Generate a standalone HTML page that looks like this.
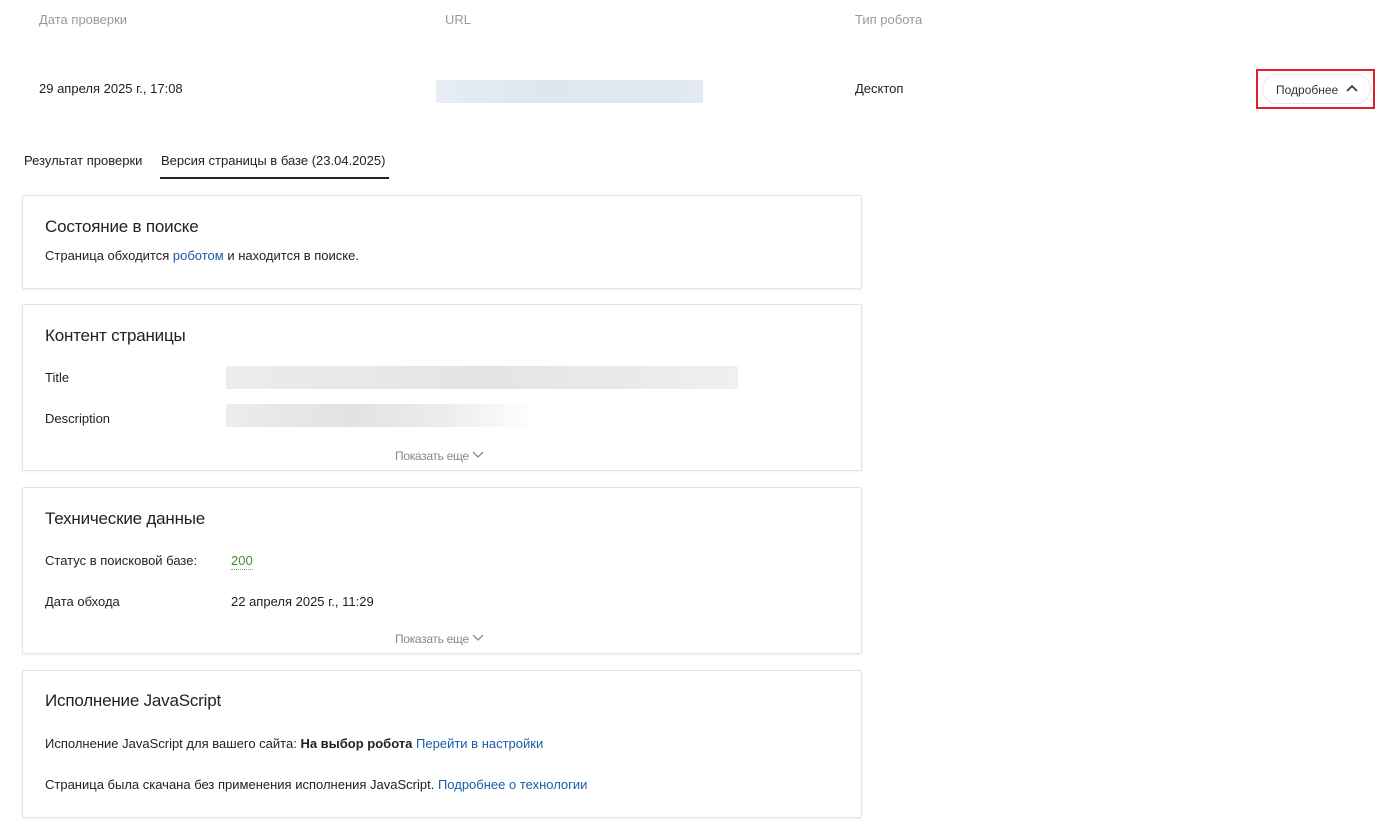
<!DOCTYPE html>
<html><head><meta charset="utf-8"><style>
*{margin:0;padding:0;box-sizing:border-box}
body{width:1392px;height:826px;background:#fff;font-family:"Liberation Sans",Arial,sans-serif;color:#222;font-size:13px;position:relative;overflow:hidden}
.a{position:absolute;white-space:nowrap;line-height:16px}
.g{color:#999}
.card{position:absolute;left:22px;width:840px;border:1px solid #e3e3e3;border-radius:2px;box-shadow:0 1px 2px rgba(0,0,0,.06)}
.h{font-size:17px;color:#222;letter-spacing:-0.2px}
.l{color:#1a5ca8}
.more{color:#888;font-size:12px;letter-spacing:-0.3px}
.blur{position:absolute;border-radius:2px}
</style></head><body>
<div class="a g" style="left:39px;top:12px">Дата проверки</div>
<div class="a g" style="left:445px;top:12px">URL</div>
<div class="a g" style="left:855px;top:12px">Тип робота</div>
<div class="a" style="left:39px;top:81px">29 апреля 2025 г., 17:08</div>
<div class="blur" style="left:436px;top:80px;width:267px;height:23px;background:linear-gradient(90deg,#e6edf4,#dfe6ee 40%,#e3e9f0)"></div>
<div class="a" style="left:855px;top:81px">Десктоп</div>
<div style="position:absolute;left:1256px;top:69px;width:119px;height:40px;border:2px solid #e0202a"></div>
<div style="position:absolute;left:1262px;top:74px;width:109px;height:30px;border:1px solid #e8e8e8;border-radius:15px"></div>
<div class="a" style="left:1276px;top:82px;font-size:12px;color:#333">Подробнее</div>
<svg style="position:absolute;left:1345px;top:83px" width="14" height="10"><path d="M2 8 L7 3 L12 8" fill="none" stroke="#333" stroke-width="1.6"/></svg>
<div class="a" style="left:24px;top:153px">Результат проверки</div>
<div class="a" style="left:161px;top:153px">Версия страницы в базе (23.04.2025)</div>
<div style="position:absolute;left:160px;top:177px;width:229px;height:2px;background:#222"></div>

<div class="card" style="top:195px;height:94px"></div>
<div class="a h" style="left:45px;top:219px">Состояние в поиске</div>
<div class="a" style="left:45px;top:248px">Страница обходится <span class="l">роботом</span> и находится в поиске.</div>

<div class="card" style="top:304px;height:167px"></div>
<div class="a h" style="left:45px;top:328px">Контент страницы</div>
<div class="a" style="left:45px;top:370px">Title</div>
<div class="blur" style="left:226px;top:366px;width:512px;height:23px;background:linear-gradient(90deg,#ececec,#e4e4e4 50%,#eaeaea 80%,#eef0f2)"></div>
<div class="a" style="left:45px;top:411px">Description</div>
<div class="blur" style="left:226px;top:404px;width:310px;height:23px;background:linear-gradient(90deg,#ececec,#e2e2e2 40%,#ececec 70%,#fff)"></div>
<div class="a more" style="left:395px;top:448px">Показать еще</div>
<svg style="position:absolute;left:471px;top:450px" width="14" height="10"><path d="M2 2 L7 7 L12 2" fill="none" stroke="#888" stroke-width="1.3"/></svg>

<div class="card" style="top:487px;height:167px"></div>
<div class="a h" style="left:45px;top:511px">Технические данные</div>
<div class="a" style="left:45px;top:553px">Статус в поисковой базе:</div>
<div class="a" style="left:231px;top:553px;color:#4a8a3a;border-bottom:1px dotted #7a7">200</div>
<div class="a" style="left:45px;top:594px">Дата обхода</div>
<div class="a" style="left:231px;top:594px">22 апреля 2025 г., 11:29</div>
<div class="a more" style="left:395px;top:631px">Показать еще</div>
<svg style="position:absolute;left:471px;top:633px" width="14" height="10"><path d="M2 2 L7 7 L12 2" fill="none" stroke="#888" stroke-width="1.3"/></svg>

<div class="card" style="top:670px;height:148px"></div>
<div class="a h" style="left:45px;top:693px">Исполнение JavaScript</div>
<div class="a" style="left:45px;top:736px">Исполнение JavaScript для вашего сайта: <b>На выбор робота</b> <span class="l">Перейти в настройки</span></div>
<div class="a" style="left:45px;top:777px">Страница была скачана без применения исполнения JavaScript. <span class="l">Подробнее о технологии</span></div>
</body></html>
